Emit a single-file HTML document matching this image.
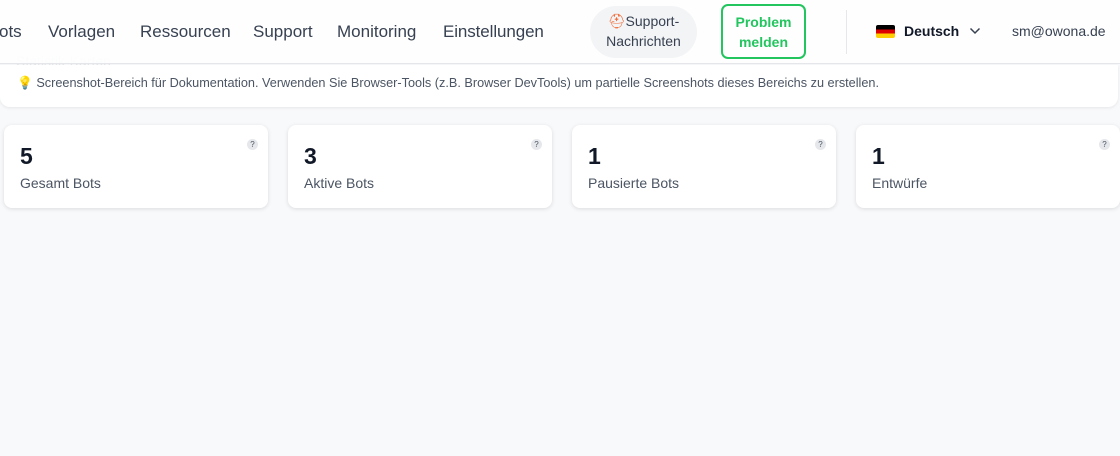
<!DOCTYPE html>
<html><head><meta charset="utf-8"><style>
*{box-sizing:border-box;margin:0;padding:0}
body{width:1120px;height:456px;overflow:hidden;background:#f8f9fb;font-family:"Liberation Sans",sans-serif;position:relative;color:#111827}
.hdr{position:absolute;left:0;top:0;width:1120px;height:64px;background:#fff;border-bottom:1px solid #e5e7eb}
.nav{position:absolute;top:22px;font-size:17px;color:#374151}
.faint{position:absolute;left:16px;top:53px;font-size:14px;color:#e5e7eb}
.tip{position:absolute;left:0;top:65px;width:1118px;height:42px;background:#fff;border-radius:0 0 10px 10px;box-shadow:0 1px 3px rgba(0,0,0,.08);font-size:12.7px;color:#4b5563;padding:11px 0 0 17px}
.card{position:absolute;top:125px;width:264px;height:83px;background:#fff;border-radius:8px;box-shadow:0 1px 4px rgba(0,0,0,.12)}
.card b{position:absolute;left:16px;top:18px;font-size:23px;color:#111827}
.card span{position:absolute;left:16px;top:50px;font-size:14px;color:#4b5563}
.q{position:absolute;right:10px;top:14px;width:11px;height:11px;border-radius:50%;background:#e5e7eb;font-size:8px;color:#4b5563;text-align:center;line-height:11px}
</style></head><body>
<div class="faint">Statistik-Karten</div>
<div class="hdr" style="background:rgba(255,255,255,.85)">
<div class="nav" style="left:-1px">ots</div>
<div class="nav" style="left:48px">Vorlagen</div>
<div class="nav" style="left:140px">Ressourcen</div>
<div class="nav" style="left:253px">Support</div>
<div class="nav" style="left:337px">Monitoring</div>
<div class="nav" style="left:443px;letter-spacing:-0.1px">Einstellungen</div>
<div style="position:absolute;left:590px;top:6px;width:107px;height:52px;border-radius:26px;background:#f3f4f6;font-size:14px;color:#374151;text-align:center;line-height:20px;padding-top:5px"><span style="color:#ef6c3a">⛑</span>Support-<br>Nachrichten</div>
<div style="position:absolute;left:721px;top:4px;width:85px;height:55px;border:2px solid #22c55e;border-radius:7px;color:#22c55e;font-weight:bold;font-size:14px;text-align:center;line-height:20px;padding-top:6px">Problem<br>melden</div>
<div style="position:absolute;left:846px;top:10px;width:1px;height:44px;background:#e5e7eb"></div>
<div style="position:absolute;left:876px;top:25px;width:19px;height:13px;background:linear-gradient(#000 33%,#dd0000 33% 66%,#ffce00 66%);border-radius:2px"></div>
<div style="position:absolute;left:904px;top:23px;font-size:14px;font-weight:bold;color:#111827">Deutsch</div>
<svg style="position:absolute;left:969px;top:27px" width="12" height="8" viewBox="0 0 12 8"><path d="M1.5 1.5 6 6l4.5-4.5" fill="none" stroke="#374151" stroke-width="1.5"/></svg>
<div style="position:absolute;left:1012px;top:23px;font-size:14px;color:#374151">sm@owona.de</div>
</div>
<div class="tip"><span style="color:#facc15">💡</span> Screenshot-Bereich für Dokumentation. Verwenden Sie Browser-Tools (z.B. Browser DevTools) um partielle Screenshots dieses Bereichs zu erstellen.</div>
<div class="card" style="left:4px"><b>5</b><span>Gesamt Bots</span><div class="q">?</div></div>
<div class="card" style="left:288px"><b>3</b><span>Aktive Bots</span><div class="q">?</div></div>
<div class="card" style="left:572px"><b>1</b><span>Pausierte Bots</span><div class="q">?</div></div>
<div class="card" style="left:856px"><b>1</b><span>Entwürfe</span><div class="q">?</div></div>
</body></html>
